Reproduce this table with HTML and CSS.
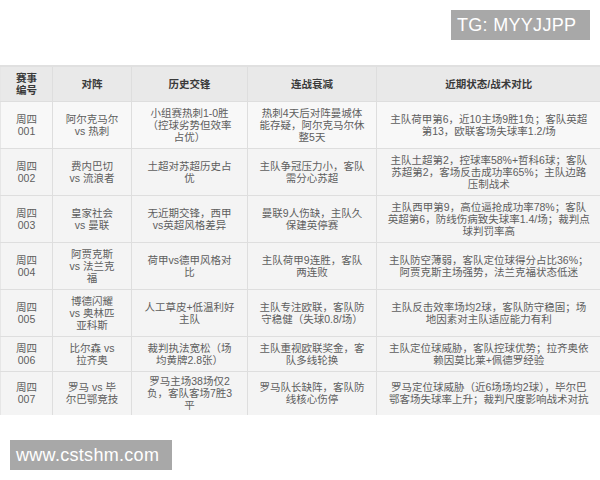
FILE: index.html
```html
<!DOCTYPE html>
<html lang="zh">
<head>
<meta charset="utf-8">
<link rel="stylesheet" href="styles.css">
</head>
<body>
<div class="page">
  <table class="matches">
    <colgroup>
      <col class="c1"><col class="c2"><col class="c3"><col class="c4"><col class="c5">
    </colgroup>
    <thead>
      <tr>
        <th>赛事<br>编号</th>
        <th>对阵</th>
        <th>历史交锋</th>
        <th>连战衰减</th>
        <th>近期状态/战术对比</th>
      </tr>
    </thead>
    <tbody>
      <tr>
        <td>周四<br>001</td>
        <td>阿尔克马尔<br>vs 热刺</td>
        <td>小组赛热刺1-0胜<br>（控球劣势但效率<br>占优）</td>
        <td>热刺4天后对阵曼城体<br>能存疑，阿尔克马尔休<br>整5天</td>
        <td>主队荷甲第6，近10主场9胜1负；客队英超<br>第13，欧联客场失球率1.2/场</td>
      </tr>
      <tr>
        <td>周四<br>002</td>
        <td>费内巴切<br>vs 流浪者</td>
        <td>土超对苏超历史占<br>优</td>
        <td>主队争冠压力小，客队<br>需分心苏超</td>
        <td>主队土超第2，控球率58%+哲科6球；客队<br>苏超第2，客场反击成功率65%；主队边路<br>压制战术</td>
      </tr>
      <tr>
        <td>周四<br>003</td>
        <td>皇家社会<br>vs 曼联</td>
        <td>无近期交锋，西甲<br>vs英超风格差异</td>
        <td>曼联9人伤缺，主队久<br>保建英停赛</td>
        <td>主队西甲第9，高位逼抢成功率78%；客队<br>英超第6，防线伤病致失球率1.4/场；裁判点<br>球判罚率高</td>
      </tr>
      <tr>
        <td>周四<br>004</td>
        <td>阿贾克斯<br>vs 法兰克<br>福</td>
        <td>荷甲vs德甲风格对<br>比</td>
        <td>主队荷甲9连胜，客队<br>两连败</td>
        <td>主队防空薄弱，客队定位球得分占比36%；<br>阿贾克斯主场强势，法兰克福状态低迷</td>
      </tr>
      <tr>
        <td>周四<br>005</td>
        <td>博德闪耀<br>vs 奥林匹<br>亚科斯</td>
        <td>人工草皮+低温利好<br>主队</td>
        <td>主队专注欧联，客队防<br>守稳健（失球0.8/场）</td>
        <td>主队反击效率场均2球，客队防守稳固；场<br>地因素对主队适应能力有利</td>
      </tr>
      <tr>
        <td>周四<br>006</td>
        <td>比尔森 vs<br>拉齐奥</td>
        <td>裁判执法宽松（场<br>均黄牌2.8张）</td>
        <td>主队重视欧联奖金，客<br>队多线轮换</td>
        <td>主队定位球威胁，客队控球优势；拉齐奥依<br>赖因莫比莱+佩德罗经验</td>
      </tr>
      <tr class="last">
        <td>周四<br>007</td>
        <td>罗马 vs 毕<br>尔巴鄂竞技</td>
        <td>罗马主场38场仅2<br>负，客队客场7胜3<br>平</td>
        <td>罗马队长缺阵，客队防<br>线核心伤停</td>
        <td>罗马定位球威胁（近6场场均2球），毕尔巴<br>鄂客场失球率上升；裁判尺度影响战术对抗</td>
      </tr>
    </tbody>
  </table>
  <div class="tag tag-top">TG: MYYJJPP</div>
  <div class="tag tag-bottom">www.cstshm.com</div>
</div>
</body>
</html>
```
FILE: styles.css
```css
html, body {
  margin: 0;
  padding: 0;
  background: #ffffff;
}
body {
  font-family: "Liberation Sans", "Noto Sans CJK SC", sans-serif;
  width: 600px;
  height: 480px;
  overflow: hidden;
}
.page {
  position: relative;
  width: 600px;
  height: 480px;
  padding-top: 65px;
  box-sizing: border-box;
}
.matches {
  width: 600px;
  border-collapse: collapse;
  table-layout: fixed;
  font-size: 10.5px;
  line-height: 12px;
  color: #5e5e5e;
  text-align: center;
}
.c1 { width: 52px; }
.c2 { width: 79px; }
.c3 { width: 116px; }
.c4 { width: 129px; }
.c5 { width: 224px; }
.matches th,
.matches td {
  border: 1px solid #dedede;
  vertical-align: middle;
  padding: 5px 4px;
}
.matches tr > :first-child { border-left: 1px solid #e6e6e6; }
.matches tr > :last-child { border-right: none; }
.matches th {
  background: #e9e9e9;
  color: #3a3a3a;
  font-weight: bold;
  height: 23px;
  border-top: 2px solid #e0e0e0;
}
.matches td {
  background: #f4f4f4;
}
.matches tbody tr:first-child td { background: #f8f8f8; }
.matches tr.last td {
  padding: 3px 4px 4px;
  border-bottom: none;
}
.tag {
  position: absolute;
  background: #a8a8a8;
  color: #ffffff;
  font-family: "Liberation Sans", sans-serif;
  font-size: 18px;
  line-height: 30px;
  letter-spacing: 0.3px;
  padding: 0 6px;
}
.tag-top {
  top: 10px;
  left: 451px;
  width: 127px;
  height: 30px;
}
.tag-bottom {
  top: 440px;
  left: 10px;
  width: 150px;
  height: 30px;
}
```
